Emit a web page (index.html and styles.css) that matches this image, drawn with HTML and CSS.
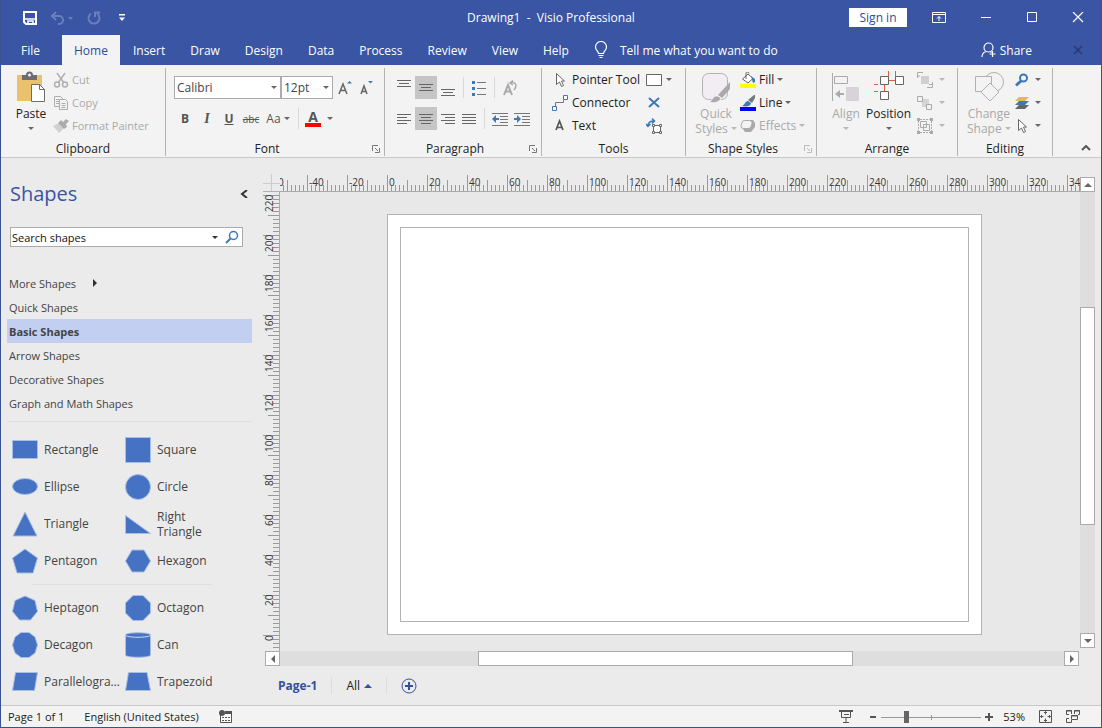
FILE: index.html
```html
<!DOCTYPE html>
<html lang="en">
<head>
<meta charset="UTF-8" />
<meta name="viewport" content="width=device-width, initial-scale=1" />
<title>Drawing1 - Visio Professional</title>
<link rel="stylesheet" href="styles.css">
</head>
<body>

<header>
  <div class="titlebar">
    <div class="quick-access">
      <button aria-label="Save"><svg width="14" height="14" viewBox="0 0 14 14" fill="none" stroke="#fff" stroke-width="2"><path d="M1 1h12v12H3l-2-2z"/><path d="M2 8h10" stroke-width="1.500"/><path d="M5 13v-3h5v3" stroke-width="1.500"/></svg></button>
      <button class="dim" aria-label="Undo"><svg width="24" height="14" viewBox="0 0 24 14" fill="none" stroke="#6a80bd" stroke-width="2"><path d="M6 1 2 5l4 4M2 5h7a4 4 0 0 1 0 8H8"/><path d="M18 6h5l-2.500 3z" fill="#6a80bd" stroke="none"/></svg></button>
      <button class="dim" aria-label="Redo"><svg width="14" height="14" viewBox="0 0 14 14" fill="none" stroke="#6a80bd" stroke-width="2"><path d="M10 2.500a5.500 5.500 0 1 1-6 0M8 6V1.500h5"/></svg></button>
      <button aria-label="Customize Quick Access Toolbar"><svg width="8" height="8" viewBox="0 0 8 8" fill="#fff"><path d="M1 0h6v1.500H1zM1 3.500h6L4 7z"/></svg></button>
    </div>
    <div class="window-title">Drawing1&nbsp; -&nbsp; Visio Professional</div>
    <div class="window-buttons">
      <button class="sign-in">Sign in</button>
      <button aria-label="Ribbon Display Options"><svg width="14" height="12" viewBox="0 0 14 12" fill="none" stroke="#fff"><path d="M.5.500h13v10H.5zM.5 2.500h13M7 9V4.500M5 6.500l2-2 2 2"/></svg></button>
      <button aria-label="Minimize"><svg width="12" height="12" viewBox="0 0 12 12" stroke="#fff"><path d="M1 5.500h10"/></svg></button>
      <button aria-label="Maximize"><svg width="12" height="12" viewBox="0 0 12 12" fill="none" stroke="#fff"><path d="M1.500.500h9v9h-9z"/></svg></button>
      <button aria-label="Close"><svg width="12" height="12" viewBox="0 0 12 12" stroke="#fff" stroke-width="1.200"><path d="m1 0 10 10M11 0 1 10"/></svg></button>
    </div>
  </div>
  <nav class="tabs">
    <a class="file" href="#file">File</a>
    <a class="active" href="#home">Home</a>
    <a href="#insert">Insert</a>
    <a href="#draw">Draw</a>
    <a href="#design">Design</a>
    <a href="#data">Data</a>
    <a href="#process">Process</a>
    <a href="#review">Review</a>
    <a href="#view">View</a>
    <a href="#help">Help</a>
    <button class="tell-me"><svg width="14" height="18" viewBox="0 0 14 18" fill="none" stroke="#fff" stroke-width="1.200"><path d="M4.500 12.500c0-2.500-3-3-3-6.500a5.500 5.500 0 0 1 11 0c0 3.500-3 4-3 6.500zM4.500 14.500h5M5.500 16.500h3"/></svg>Tell me what you want to do</button>
    <button class="share"><svg width="16" height="16" viewBox="0 0 16 16" fill="none" stroke="#fff" stroke-width="1.200"><circle cx="7.500" cy="5.500" r="4.500"/><path d="M1 15c0-3 2-5 4.500-5.500M9 9.500l1.500 1M11.500 9v6M8.500 12h6"/></svg>Share</button>
    <button class="close-doc" aria-label="Close document"><svg width="10" height="10" viewBox="0 0 10 10" stroke="#26396f" stroke-width="1.500"><path d="m1 1 8 8M9 1 1 9"/></svg></button>
  </nav>
</header>

<section class="ribbon">
  <div class="group clipboard">
    <div class="group-body">
      <button class="big"><svg width="30" height="32" viewBox="0 0 30 32"><path d="M1 4h25v26H1z" fill="#eac26e"/><path d="M6 4h4a3.500 3.500 0 0 1 7 0h4v5H6z" fill="#6d6d6d"/><circle cx="13.500" cy="4" r="1.500" fill="#f3f3f3"/><path d="M15.500 13.500h8l5 5v12h-13z" fill="#fff" stroke="#6d6d6d"/><path d="M23.500 13.500v5h5" fill="none" stroke="#6d6d6d"/></svg>Paste<i class="caret"></i></button>
      <div class="rows">
        <button class="row off"><svg width="16" height="16" viewBox="0 0 16 16" fill="none" stroke="#b0b0b0" stroke-width="1.500"><path d="m4 1 7 10M12 1 5 11"/><circle cx="4" cy="12.500" r="2.500"/><circle cx="12" cy="12.500" r="2.500"/></svg>Cut</button>
        <button class="row off"><svg width="16" height="16" viewBox="0 0 16 16" fill="#f3f3f3" stroke="#adadad"><path d="M1.500 1.500h6l2 2v8h-8z"/><path d="M6.500 4.500h6l2 2v8h-8z"/><path d="M3 4.500h3M3 6.500h3M3 8.500h3M8.500 8.500h4M8.500 10.500h4M8.500 12.500h4"/></svg>Copy</button>
        <button class="row off"><svg width="16" height="16" viewBox="0 0 16 16"><path d="m0 8 6-3 5 5-5 5z" fill="#d2d0d2"/><path d="m5 5 3-3 2 2 3-3 3 2-3 3 1 3-3 2z" fill="#acacac"/></svg>Format Painter</button>
      </div>
    </div>
    <h2>Clipboard</h2>
  </div>

  <div class="group font with-launcher">
    <div class="group-body stacked">
      <div class="line">
        <span class="combo"><select class="font-name" aria-label="Font"><option>Calibri</option></select><i class="caret"></i></span>
        <span class="combo"><select class="font-size" aria-label="Font size"><option>12pt</option></select><i class="caret"></i></span>
        <button class="tool" aria-label="Increase font size"><svg width="16" height="16" viewBox="0 0 16 16" fill="none" stroke="#666" stroke-width="1.500"><path d="m3 14 4-10 4 10M4.500 10.500h5"/><path d="M11 3.500 13.500 1 16 3.500z" fill="#3e78b5" stroke="none"/></svg></button>
        <button class="tool" aria-label="Decrease font size"><svg width="16" height="16" viewBox="0 0 16 16" fill="none" stroke="#666" stroke-width="1.500"><path d="m4 14 3-8 3 8M5 11.500h4"/><path d="M11 1h5l-2.500 2.500z" fill="#3e78b5" stroke="none"/></svg></button>
      </div>
      <div class="line">
        <button class="tool"><b>B</b></button>
        <button class="tool serif"><b><em>I</em></b></button>
        <button class="tool"><b><u>U</u></b></button>
        <button class="tool small"><s>abc</s></button>
        <button class="tool wide">Aa<i class="caret"></i></button>
        <i class="bar"></i>
        <button class="tool color"><span>A</span><i class="caret"></i></button>
      </div>
    </div>
    <h2>Font</h2>
    <button class="launcher" aria-label="Font settings"><svg width="8" height="8" viewBox="0 0 8 8" fill="none" stroke="#777"><path d="M.5 6V.500H6M3 3l3 3M7.500 3v4.500H3"/></svg></button>
  </div>

  <div class="group paragraph with-launcher">
    <div class="group-body stacked">
      <div class="line">
        <button class="tool" aria-label="Align top"><svg width="14" height="16" viewBox="0 0 14 16" stroke="#666"><path d="M0 .500h14M2 3.500h10M0 6.500h14"/></svg></button>
        <button class="tool on" aria-label="Align middle"><svg width="14" height="16" viewBox="0 0 14 16" stroke="#666"><path d="M0 4.500h14M2 7.500h10M0 10.500h14"/></svg></button>
        <button class="tool" aria-label="Align bottom"><svg width="14" height="16" viewBox="0 0 14 16" stroke="#666"><path d="M0 9.500h14M2 12.500h10M0 15.500h14"/></svg></button>
        <i class="bar"></i>
        <button class="tool" aria-label="Bullets"><svg width="14" height="16" viewBox="0 0 14 16"><path d="M5 2.500h9M5 8.500h9M5 14.500h9" stroke="#777"/><path d="M0 1h3v3H0zM0 7h3v3H0zM0 13h3v3H0z" fill="#3e78b5"/></svg></button>
        <i class="bar"></i>
        <button class="tool" aria-label="Rotate text"><svg width="16" height="16" viewBox="0 0 16 16" fill="none" stroke="#aaa"><path d="m2 15 4-10 4 10M3.500 11.500h5" stroke-width="2"/><path d="M8 3c5-2 8 2 4 7M11 .500 8 3l3 2" stroke-width="1.500"/></svg></button>
      </div>
      <div class="line">
        <button class="tool" aria-label="Align left"><svg width="14" height="12" viewBox="0 0 14 12" stroke="#666"><path d="M0 1.500h14M0 4.500h10M0 7.500h14M0 10.500h10"/></svg></button>
        <button class="tool on" aria-label="Center"><svg width="14" height="12" viewBox="0 0 14 12" stroke="#666"><path d="M0 1.500h14M2 4.500h10M0 7.500h14M2 10.500h10"/></svg></button>
        <button class="tool" aria-label="Align right"><svg width="14" height="12" viewBox="0 0 14 12" stroke="#666"><path d="M0 1.500h14M4 4.500h10M0 7.500h14M4 10.500h10"/></svg></button>
        <button class="tool" aria-label="Justify"><svg width="14" height="12" viewBox="0 0 14 12" stroke="#666"><path d="M0 1.500h14M0 4.500h14M0 7.500h14M0 10.500h14"/></svg></button>
        <i class="bar"></i>
        <button class="tool" aria-label="Decrease indent"><svg width="16" height="14" viewBox="0 0 16 14"><path d="M0 1.500h16M8 4.500h8M8 7.500h8M8 10.500h8M0 13.500h16" stroke="#777"/><path d="M0 7l4-4v3h3v2H4v3z" fill="#3e78b5"/></svg></button>
        <button class="tool" aria-label="Increase indent"><svg width="16" height="14" viewBox="0 0 16 14"><path d="M0 1.500h16M8 4.500h8M8 7.500h8M8 10.500h8M0 13.500h16" stroke="#777"/><path d="M7 7 3 3v3H0v2h3v3z" fill="#3e78b5"/></svg></button>
      </div>
    </div>
    <h2>Paragraph</h2>
    <button class="launcher" aria-label="Paragraph settings"><svg width="8" height="8" viewBox="0 0 8 8" fill="none" stroke="#777"><path d="M.5 6V.500H6M3 3l3 3M7.500 3v4.500H3"/></svg></button>
  </div>

  <div class="group tools">
    <div class="group-body">
      <div class="rows">
        <button class="row"><svg width="16" height="16" viewBox="0 0 16 16" fill="#fff" stroke="#666"><path d="M4.500 1.500v11l3-2.500 2 4.500 2-1-2-4.500h3z"/></svg>Pointer Tool</button>
        <button class="row"><svg width="16" height="16" viewBox="0 0 16 16" fill="#fff"><path d="M3.500 11V7.500h8V5" fill="none" stroke="#777"/><path d="M.500 11.500h4v4h-4zM11.500.500h4v4h-4z" stroke="#3e78b5"/></svg>Connector</button>
        <button class="row"><svg width="16" height="16" viewBox="0 0 16 16" fill="none" stroke="#555" stroke-width="1.700"><path d="m4 12 3.500-9L11 12M5 9.500h5"/></svg>Text</button>
      </div>
      <div class="rows">
        <button class="row" aria-label="Rectangle"><svg width="16" height="12" viewBox="0 0 16 12" fill="#fff" stroke="#666"><path d="M.5.500h15v11H.5z"/></svg><i class="caret"></i></button>
        <button class="row" aria-label="Connection point"><svg width="16" height="16" viewBox="0 0 16 16" stroke="#3e78b5" stroke-width="2"><path d="m3 3 10 9M13 3 3 12"/></svg></button>
        <button class="row" aria-label="Text block"><svg width="16" height="16" viewBox="0 0 16 16" fill="#fff" stroke="#666"><path d="M7.500 7.500h7v7h-7z"/><path d="M6.500 6.500h2v2h-2zM13.500 6.500h2v2h-2zM6.500 13.500h2v2h-2zM13.500 13.500h2v2h-2z"/><path d="M2 8c0-4 2-5 6-5M6 .500 8.500 3 6 5.500M0 6l2 2.500L4.500 6" fill="none" stroke="#3e78b5" stroke-width="1.500"/></svg></button>
      </div>
    </div>
    <h2>Tools</h2>
  </div>

  <div class="group styles with-launcher">
    <div class="group-body">
      <button class="big off"><svg width="30" height="32" viewBox="0 0 30 32"><rect x="1.500" y="2.500" width="25" height="26" rx="6" fill="#f2edf3" stroke="#b5b2b5"/><path d="M29 11v7l-8 9-4-3z" fill="#aaa"/><path d="M8 31c4-1 3-7 9-6l3 2c-1 4-7 6-12 4z" fill="#aaa" stroke="#f3f3f3"/></svg>Quick<span>Styles<i class="caret"></i></span></button>
      <div class="rows">
        <button class="row"><svg width="16" height="16" viewBox="0 0 16 16"><path d="M0 12h16v4H0z" fill="#ff0"/><path d="M2.500 7 8 2l5 4.500L8 11z" fill="#fff" stroke="#666"/><path d="M6 7V1.500a1.500 1.500 0 0 1 3 0" fill="none" stroke="#666"/><path d="m11 4 4 3v3l-2 1z" fill="#3e78b5"/></svg>Fill<i class="caret"></i></button>
        <button class="row"><svg width="16" height="16" viewBox="0 0 16 16"><path d="M0 12h16v4H0z" fill="#00f"/><path d="M2 11c3-1 3-5 6-5l3 2c0 3-4 4-9 3z" fill="#3e78b5"/><path d="m8 5 6-5h1v3l-3 5z" fill="#777"/></svg>Line<i class="caret"></i></button>
        <button class="row off"><svg width="16" height="16" viewBox="0 0 16 16"><path d="M6 2h7l2 3v4l-4 5H5l-2-3z" fill="#aaa"/><path d="M4.500 2.500h5q3 0 2.500 3l-1 3q-.5 2-2.500 2h-5q-3 0-2.500-3l1-3q.5-2 2.500-2z" fill="#f3f3f3" stroke="#aaa"/></svg>Effects<i class="caret"></i></button>
      </div>
    </div>
    <h2>Shape Styles</h2>
    <button class="launcher off" aria-label="Shape style settings"><svg width="8" height="8" viewBox="0 0 8 8" fill="none" stroke="#bbb"><path d="M.5 6V.500H6M3 3l3 3M7.500 3v4.500H3"/></svg></button>
  </div>

  <div class="group arrange">
    <div class="group-body">
      <button class="big off"><svg width="28" height="32" viewBox="0 0 28 32"><path d="M.500 2v28" stroke="#aaa"/><path d="M2.500 5.500h13v7h-13z" fill="#f3f3f3" stroke="#aaa"/><path d="M14 16h13v14H14z" fill="#d8d3d8"/><path d="m3 23 5-4v3h4v2H8v3z" fill="#aaa"/></svg>Align<i class="caret"></i></button>
      <button class="big"><svg width="30" height="32" viewBox="0 0 30 32" fill="#fff" stroke="#666"><path d="M14.500 0v6M21.500 0v9M14 9.500h8M10.500 14v7M0 13.500h4M0 20.500h4" stroke="#d9603b"/><path d="M6.500 5.500h8v8h-8zM21.500 5.500h8v8h-8zM6.500 20.500h8v8h-8z"/></svg>Position<i class="caret"></i></button>
      <div class="rows">
        <button class="row off" aria-label="Bring to front"><svg width="16" height="16" viewBox="0 0 16 16" fill="none" stroke="#aaa"><path d="M4 4h8v8H4z" fill="#d2ced2" stroke="none"/><path d="M.5 6V.500H6M.5 4H3M10 15.500h5.500V10M12 12.500h3.500"/></svg><i class="caret"></i></button>
        <button class="row off" aria-label="Send to back"><svg width="16" height="16" viewBox="0 0 16 16" fill="#f3f3f3" stroke="#aaa"><path d="M5 4h7v8H5z" fill="#d8d3d8" stroke="none"/><path d="M.5 1.500h5v5h-5zM9.500 9.500h5v5h-5z"/></svg><i class="caret"></i></button>
        <button class="row off" aria-label="Group"><svg width="16" height="16" viewBox="0 0 16 16" fill="none" stroke="#aaa"><path d="M3 1.500h10M3 14.500h10M1.500 3v10M14.500 3v10" stroke-dasharray="2 1"/><path d="M3.500 3.500h6v6h-6zM6.500 6.500h6v6h-6z"/><path d="M0 0h3v3H0zM13 0h3v3h-3zM0 13h3v3H0zM13 13h3v3h-3z" fill="#aaa" stroke="none"/></svg><i class="caret"></i></button>
      </div>
    </div>
    <h2>Arrange</h2>
  </div>

  <div class="group editing">
    <div class="group-body">
      <button class="big off"><svg width="30" height="32" viewBox="0 0 30 32" fill="#f3f3f3" stroke="#b0b0b0"><circle cx="20" cy="11" r="9.500"/><path d="M1.500 5.500h16v15h-16z"/><path d="m16 12 9 9-9 9-9-9z"/></svg>Change<span>Shape<i class="caret"></i></span></button>
      <div class="rows">
        <button class="row" aria-label="Find"><svg width="14" height="14" viewBox="0 0 14 14" fill="none" stroke="#3e78b5" stroke-width="2"><circle cx="8.500" cy="5" r="3.500"/><path d="m6 8-5 4.500" stroke-width="3"/></svg><i class="caret"></i></button>
        <button class="row" aria-label="Layers"><svg width="14" height="14" viewBox="0 0 14 14"><path d="M4 9h10l-4 4H0z" fill="#666"/><path d="M4 5h10l-4 4H0z" fill="#3e78b5"/><path d="M4 1h10l-4 4H0z" fill="#e8b45c"/></svg><i class="caret"></i></button>
        <button class="row" aria-label="Select"><svg width="14" height="16" viewBox="0 0 14 16" fill="#fff" stroke="#666"><path d="M3.500 1.500v11l3-2.500 2 4.500 2-1-2-4.500h3z"/></svg><i class="caret"></i></button>
      </div>
    </div>
    <h2>Editing</h2>
  </div>
  <button class="collapse-ribbon" aria-label="Collapse the ribbon"><svg width="10" height="6" viewBox="0 0 10 6" fill="none" stroke="#555" stroke-width="2"><path d="m1 5 4-4 4 4"/></svg></button>
</section>

<main>
  <aside class="shapes">
    <div class="shapes-head">
      <h1>Shapes</h1>
      <button aria-label="Minimize the shapes window"><svg width="8" height="8" viewBox="0 0 8 8" fill="none" stroke="#333" stroke-width="2"><path d="M7 0 2 4l5 4"/></svg></button>
    </div>
    <div class="search">
      <input type="text" value="Search shapes" aria-label="Search shapes">
      <i class="caret"></i>
      <button aria-label="Search"><svg width="14" height="14" viewBox="0 0 14 14" fill="none" stroke="#3e78b5"><circle cx="8.500" cy="5.500" r="4" stroke-width="1.500"/><path d="M5.500 8.500 1 13" stroke-width="2"/></svg></button>
    </div>
    <nav class="stencils">
      <a href="#more">More Shapes<svg width="6" height="8" viewBox="0 0 6 8" fill="#333"><path d="m1 0 4 4-4 4z"/></svg></a>
      <a href="#quick">Quick Shapes</a>
      <a class="selected" href="#basic">Basic Shapes</a>
      <a href="#arrow">Arrow Shapes</a>
      <a href="#decorative">Decorative Shapes</a>
      <a href="#graph">Graph and Math Shapes</a>
    </nav>
    <div class="shape-grid">
      <div class="shape"><svg viewBox="0 0 26 26"><path d="M.500 3.500h25v18H.5z"/></svg><span>Rectangle</span></div>
      <div class="shape"><svg viewBox="0 0 26 26"><path d="M.5.500h25v25H.5z"/></svg><span>Square</span></div>
      <div class="shape"><svg viewBox="0 0 26 26"><ellipse cx="13" cy="12.500" rx="12.500" ry="8"/></svg><span>Ellipse</span></div>
      <div class="shape"><svg viewBox="0 0 26 26"><circle cx="13" cy="13" r="12.500"/></svg><span>Circle</span></div>
      <div class="shape"><svg viewBox="0 0 26 26"><path d="m13 1 12 24H1z"/></svg><span>Triangle</span></div>
      <div class="shape"><svg viewBox="0 0 26 26"><path d="m.5 4.500 25 18H.5z"/></svg><span>Right Triangle</span></div>
      <div class="shape"><svg viewBox="0 0 26 26"><path d="m13 1 12.500 9-4.500 15H5L.5 10z"/></svg><span>Pentagon</span></div>
      <div class="shape"><svg viewBox="0 0 26 26"><path d="M7 2h12l6.500 11L19 24H7L.5 13z"/></svg><span>Hexagon</span></div>
    </div>
    <div class="shape-grid second">
      <div class="shape"><svg viewBox="0 0 26 26"><path d="m13 1 10 4.500 2.500 11L18.500 25h-11L.5 16.500 3 5.500z"/></svg><span>Heptagon</span></div>
      <div class="shape"><svg viewBox="0 0 26 26"><path d="M8 .500h10L25.500 8v10L18 25.500H8L.5 18V8z"/></svg><span>Octagon</span></div>
      <div class="shape"><svg viewBox="0 0 26 26"><path d="M9 .500h8L23 5l2.500 8-2.500 8-6 4.500H9L3 21 .5 13 3 5z"/></svg><span>Decagon</span></div>
      <div class="shape"><svg viewBox="0 0 26 26"><path d="M.5 3c0-3 25-3 25 0v20c0 3-25 3-25 0z"/><path d="M.5 3c0 3 25 3 25 0" fill="none" stroke="#d5def2"/></svg><span>Can</span></div>
      <div class="shape"><svg viewBox="0 0 26 26"><path d="M3.500 3.500h22l-3 18H.5z"/></svg><span>Parallelogram</span></div>
      <div class="shape"><svg viewBox="0 0 26 26"><path d="M3.500 3.500h18.500l3.500 18H.5z"/></svg><span>Trapezoid</span></div>
    </div>
  </aside>

  <section class="drawing">
    <div class="workspace">
      <div class="corner"></div>
      <div class="ruler across" id="ruler-x"></div>
      <div class="ruler down" id="ruler-y"></div>
      <div class="canvas"><div class="page"><div class="margins"></div></div></div>
      <div class="scroll vertical">
        <button aria-label="Scroll up"><svg width="8" height="4" viewBox="0 0 8 4"><path d="m4 0 4 4H0z"/></svg></button>
        <div class="track"><div class="thumb"></div></div>
        <button aria-label="Scroll down"><svg width="8" height="4" viewBox="0 0 8 4"><path d="M0 0h8L4 4z"/></svg></button>
      </div>
      <div class="scroll horizontal">
        <button aria-label="Scroll left"><svg width="4" height="8" viewBox="0 0 4 8"><path d="M4 0v8L0 4z"/></svg></button>
        <div class="track"><div class="thumb"></div></div>
        <button aria-label="Scroll right"><svg width="4" height="8" viewBox="0 0 4 8"><path d="m0 0 4 4-4 4z"/></svg></button>
      </div>
    </div>
    <div class="page-tabs">
      <a class="current" href="#page1">Page-1</a>
      <button>All<svg width="8" height="4" viewBox="0 0 8 4" fill="#34509b"><path d="m4 0 4 4H0z"/></svg></button>
      <button aria-label="Insert page"><svg width="16" height="16" viewBox="0 0 16 16" fill="none" stroke="#34509b"><circle cx="8" cy="8" r="7"/><path d="M8 4v8M4 8h8" stroke-width="2"/></svg></button>
    </div>
  </section>
</main>

<footer>
  <span>Page 1 of 1</span>
  <span>English (United States)</span>
  <button aria-label="Macros"><svg width="13" height="13" viewBox="0 0 13 13"><path d="M1.500 5v7.500h11v-11H6" fill="#fff" stroke="#555"/><path d="M6 1h7v3H6z" fill="#555"/><circle cx="3" cy="3" r="3" fill="#555"/><path d="M3 7.500h8M3 10.500h8" stroke="#555" stroke-dasharray="2 1"/></svg></button>
  <div class="zoom">
    <button aria-label="Presentation mode"><svg width="14" height="13" viewBox="0 0 14 13" fill="none" stroke="#555"><path d="M0 1h14" stroke-width="2"/><path d="M2.500 2v5.500h9V2M5 4.500h5M7 8v4M4 12.500h6"/></svg></button>
    <button class="minus" aria-label="Zoom out"><svg width="8" height="8" viewBox="0 0 8 8" stroke="#555" stroke-width="2"><path d="M1 4h6"/></svg></button>
    <input type="range" min="0" max="100" value="24" aria-label="Zoom">
    <button aria-label="Zoom in"><svg width="8" height="8" viewBox="0 0 8 8" stroke="#555" stroke-width="2"><path d="M0 4h8M4 0v8"/></svg></button>
    <span class="percent">53%</span>
    <button aria-label="Fit page to window"><svg width="13" height="13" viewBox="0 0 13 13" fill="none" stroke="#555"><path d="M.5.500h12v12H.5z"/><path d="M6.500 1.500v3M6.500 8.500v3M1.500 6.500h3M8.500 6.500h3M5 3l1.500-1.500L8 3M5 10l1.500 1.500L8 10M3 5 1.500 6.500 3 8M10 5l1.500 1.500L10 8"/></svg></button>
    <button aria-label="Switch windows"><svg width="14" height="13" viewBox="0 0 14 13" fill="none" stroke="#555"><path d="M3 4.500H.500v-4h5V4M8.500 4V.500h5v4H12M3 8.500H.500v4h5V10M5.500 5.500h6v4h-6z"/><path d="M0 1h6M8 1h6M5 6h7" /></svg></button>
  </div>
</footer>

<script>
  function addLabels(id, from, to, step){
    const ruler = document.getElementById(id);
    for(let n = from; n !== to + step; n += step){
      const mark = document.createElement('span');
      mark.textContent = n;
      ruler.appendChild(mark);
    }
  }

  addLabels('ruler-x', -60, 340, 20);
  addLabels('ruler-y', 220, 0, -20);
</script>

</body>
</html>
```
FILE: styles.css
```css
* {
  box-sizing: border-box;
}
body {
  margin: 0;
  height: 100vh;
  display: flex;
  flex-direction: column;
  font-family: "Open Sans", "Noto Sans", sans-serif;
  font-size: 12px;
  color: #222;
  background: #ebebeb;
  border: 1px solid #3a5390;
  border-top: none;
  overflow: hidden;
}
button {
  font: inherit;
  color: inherit;
  background: none;
  border: none;
  padding: 0;
  display: flex;
  align-items: center;
  justify-content: center;
  white-space: nowrap;
}
a {
  color: inherit;
  text-decoration: none;
}
svg {
  display: block;
  flex: none;
}
.caret {
  width: 0;
  height: 0;
  flex: none;
  border: 3px solid transparent;
  border-top-color: #666;
  border-bottom: none;
}
.off {
  color: #a9a9a9;
}
.off .caret {
  border-top-color: #b8b8b8;
}

/* Title bar and tabs */
header {
  background: #3955a3;
  color: white;
}
.titlebar {
  height: 35px;
  display: grid;
  grid-template-columns: 1fr auto 1fr;
  align-items: center;
}
.quick-access {
  display: flex;
  gap: 13px;
  padding-left: 22px;
}
.quick-access button:last-child {
  margin-left: 4px;
}
.window-buttons {
  display: flex;
  align-items: center;
  justify-content: flex-end;
  gap: 34px;
  padding-right: 17px;
}
.sign-in {
  background: white;
  color: #2f4b98;
  width: 58px;
  height: 19px;
  margin-right: -9px;
}
.tabs {
  height: 30px;
  display: flex;
  align-items: stretch;
  gap: 1px;
}
.tabs a {
  display: flex;
  align-items: center;
  padding: 0 12px;
}
.tabs .file {
  width: 60px;
  padding: 0 20px;
}
.tabs .active {
  background: #f3f3f3;
  color: #2f4b98;
}
.tell-me {
  gap: 12px;
  margin-left: 12px;
}
.share {
  gap: 3px;
  margin-left: auto;
}
.close-doc {
  margin: 0 18px 0 40px;
}

/* Ribbon */
.ribbon {
  height: 93px;
  flex: none;
  display: flex;
  padding: 3px 0 1px;
  background: #f3f3f3;
  border-bottom: 1px solid #c8c8c8;
}
.group {
  flex: none;
  display: flex;
  flex-direction: column;
  justify-content: space-between;
  position: relative;
  border-right: 1px solid #b4b4b4;
}
.group h2 {
  margin: 0;
  font-size: 12px;
  font-weight: normal;
  line-height: 14px;
  text-align: center;
}
.with-launcher h2 {
  padding-right: 16px;
}
.group-body {
  display: flex;
}
.stacked {
  flex-direction: column;
  gap: 8px;
  padding: 8px 8px 0;
}
.line {
  display: flex;
  align-items: center;
  height: 23px;
}
.launcher {
  position: absolute;
  right: 4px;
  bottom: 3px;
}
.big {
  flex-direction: column;
  justify-content: flex-start;
  line-height: 15px;
  padding-top: 3px;
}
.big svg {
  margin-bottom: 3px;
}
.big .caret {
  margin-top: 6px;
}
.big span {
  display: flex;
  align-items: center;
}
.big span .caret {
  margin: 0 0 0 3px;
}
.rows {
  display: flex;
  flex-direction: column;
}
.row {
  height: 23px;
  gap: 4px;
  justify-content: flex-start;
}
.clipboard {
  width: 165px;
}
.clipboard .big {
  width: 36px;
  margin: 0 4px 0 12px;
}
.clipboard .row {
  gap: 3px;
  font-size: 11px;
}
.font {
  width: 219px;
}
.paragraph {
  width: 157px;
}
.tools {
  width: 144px;
}
.tools .group-body {
  gap: 6px;
  padding-left: 10px;
}
.styles {
  width: 131px;
}
.styles .big {
  width: 42px;
  margin: 0 3px 0 9px;
}
.styles .row {
  gap: 3px;
}
.arrange {
  width: 141px;
}
.arrange .group-body {
  gap: 6px;
  padding-left: 15px;
}
.arrange .row,
.editing .row {
  gap: 6px;
}
.editing {
  width: 95px;
}
.editing .group-body {
  gap: 4px;
  padding-left: 9px;
}
.collapse-ribbon {
  align-self: flex-end;
  margin: 0 10px 5px auto;
}
.combo {
  position: relative;
  display: flex;
}
.combo .caret {
  position: absolute;
  right: 4px;
  top: 10px;
}
select {
  appearance: none;
  height: 23px;
  font: inherit;
  color: #444;
  background: white;
  border: 1px solid #ababab;
  border-radius: 0;
  padding: 0 2px;
}
.font-name {
  width: 107px;
}
.font-size {
  width: 52px;
}
.tool {
  width: 22px;
  height: 23px;
  color: #555;
}
.on {
  background: #c5c5c5;
}
.serif {
  font-family: "Liberation Serif", serif;
  font-size: 14px;
}
.small {
  font-size: 10px;
}
.wide {
  width: 32px;
  gap: 3px;
}
.bar {
  width: 1px;
  height: 21px;
  margin: 0 4px;
  background: #d8d8d8;
}
.color {
  width: 32px;
  gap: 6px;
}
.color span {
  width: 16px;
  font-size: 14px;
  font-weight: bold;
  line-height: 13px;
  border-bottom: 4px solid #f00;
}

/* Shapes pane */
main {
  flex: 1;
  min-height: 0;
  display: flex;
}
.shapes {
  width: 262px;
  flex: none;
  padding: 20px 11px 0 6px;
  color: #444;
  overflow: hidden;
}
.shapes-head {
  display: flex;
  align-items: center;
  justify-content: space-between;
  padding: 0 4px 0 3px;
}
.shapes-head h1 {
  margin: 0;
  font-size: 20px;
  font-weight: normal;
  line-height: 32px;
  color: #3955a3;
}
.search {
  height: 20px;
  display: flex;
  align-items: center;
  gap: 7px;
  margin: 17px 9px 24px 3px;
  padding-right: 3px;
  background: white;
  border: 1px solid #ababab;
}
.search input {
  flex: 1;
  min-width: 0;
  padding: 0 1px;
  border: none;
  outline: none;
  background: none;
  font: inherit;
  font-size: 11px;
  color: #111;
}
.search .caret {
  border-top-color: #333;
}
.stencils {
  padding-bottom: 6px;
  font-size: 11px;
  border-bottom: 1px solid #dfdfdf;
}
.stencils a {
  display: flex;
  align-items: center;
  gap: 16px;
  height: 24px;
  padding-left: 2px;
}
.stencils .selected {
  background: #c3cff1;
  font-weight: bold;
}
.shape-grid {
  display: grid;
  grid-template-columns: 113px 1fr;
  grid-auto-rows: 37px;
  padding: 9px 0 5px 5px;
}
.second {
  padding-top: 5px;
  background: linear-gradient(#dfdfdf, #dfdfdf) 25px 0 / 180px 1px no-repeat;
}
.shape {
  display: flex;
  align-items: center;
  gap: 6px;
  line-height: 15px;
}
.shape svg {
  width: 26px;
  height: 26px;
  fill: #4672c4;
  stroke: #a9bee5;
}
.shape span {
  max-width: 76px;
  overflow: hidden;
  text-overflow: ellipsis;
}

/* Drawing window */
.drawing {
  flex: 1;
  min-width: 0;
  display: flex;
  flex-direction: column;
}
.workspace {
  flex: 1;
  min-height: 0;
  display: grid;
  grid-template-columns: 17px 1fr 15px;
  grid-template-rows: 18px 1fr 15px;
  padding: 16px 6px 0 0;
}
.corner {
  background: linear-gradient(#ccc, #ccc) 8px 0 / 1px 100% no-repeat, linear-gradient(#ccc, #ccc) 0 9px / 100% 1px no-repeat;
  border-bottom: 1px solid #b0b0b0;
}
.ruler {
  display: flex;
  overflow: hidden;
  font-size: 10px;
  line-height: 12px;
  color: #333;
}
.ruler span {
  flex: none;
}
.across {
  border-bottom: 1px solid #aaa;
}
.across span {
  width: 40px;
  padding: 2px 0 0 2px;
  background:
    linear-gradient(#999, #999) 0 100% / 1px 16px no-repeat,
    linear-gradient(#999, #999) 20px 100% / 1px 11px no-repeat,
    repeating-linear-gradient(to right, #999 0 1px, transparent 1px 4px) 0 100% / 100% 6px no-repeat;
}
.across span:first-child {
  margin-left: -13px;
}
.down {
  flex-direction: column;
  padding-top: 3px;
  border-right: 1px solid #aaa;
}
.down span {
  height: 40px;
  writing-mode: vertical-rl;
  transform: rotate(180deg);
  text-align: right;
  background:
    linear-gradient(#999, #999) 0 100% / 16px 1px no-repeat,
    linear-gradient(#999, #999) 0 19px / 11px 1px no-repeat,
    repeating-linear-gradient(to top, #999 0 1px, transparent 1px 4px) 0 0 / 6px 100% no-repeat;
}
.canvas {
  display: flex;
  padding: 22px 98px 16px 107px;
  background: #e8e8e8;
}
.page {
  flex: 1;
  padding: 12px;
  display: flex;
  background: white;
  border: 1px solid #b3b3b3;
}
.margins {
  flex: 1;
  border: 1px solid #b3b3b3;
}
.scroll {
  display: flex;
}
.scroll button {
  width: 15px;
  height: 15px;
  flex: none;
  background: white;
  border: 1px solid #ababab;
}
.scroll svg {
  fill: #666;
}
.track {
  flex: 1;
  display: grid;
  background: #dedede;
}
.thumb {
  background: white;
  border: 1px solid #ababab;
}
.vertical {
  grid-area: 1 / 3 / 3 / 4;
  flex-direction: column;
  padding: 3px 0;
}
.vertical .track {
  grid-template-rows: 115fr 219fr 108fr;
}
.vertical .thumb {
  grid-row: 2;
}
.horizontal {
  grid-area: 3 / 1 / 4 / 3;
  padding: 0 1px 0 2px;
}
.horizontal .track {
  grid-template-columns: 198fr 375fr 211fr;
}
.horizontal .thumb {
  grid-column: 2;
}
.page-tabs {
  height: 39px;
  display: flex;
  align-items: center;
  padding-left: 15px;
}
.page-tabs button {
  gap: 4px;
  height: 17px;
  padding-left: 14px;
  margin-left: 14px;
  border-left: 1px solid #ddd;
}
.page-tabs .current {
  color: #34509b;
  font-weight: bold;
}

/* Status bar */
footer {
  height: 22px;
  flex: none;
  display: flex;
  align-items: center;
  gap: 20px;
  padding: 0 21px 0 7px;
  font-size: 11px;
  background: #f3f3f3;
  border-top: 1px solid #c8c8c8;
}
.zoom {
  display: flex;
  align-items: center;
  margin-left: auto;
}
.minus {
  margin-left: 16px;
}
.zoom input {
  appearance: none;
  width: 100px;
  height: 12px;
  margin: 0 4px;
  background:
    linear-gradient(#999, #999) 0 6px / 100% 1px no-repeat,
    linear-gradient(#999, #999) 50px 4px / 1px 5px no-repeat;
}
.zoom input::-webkit-slider-thumb {
  appearance: none;
  width: 5px;
  height: 12px;
  background: #666;
}
.percent {
  margin: 0 14px 0 10px;
}
.percent + button {
  margin-right: 14px;
}
```
